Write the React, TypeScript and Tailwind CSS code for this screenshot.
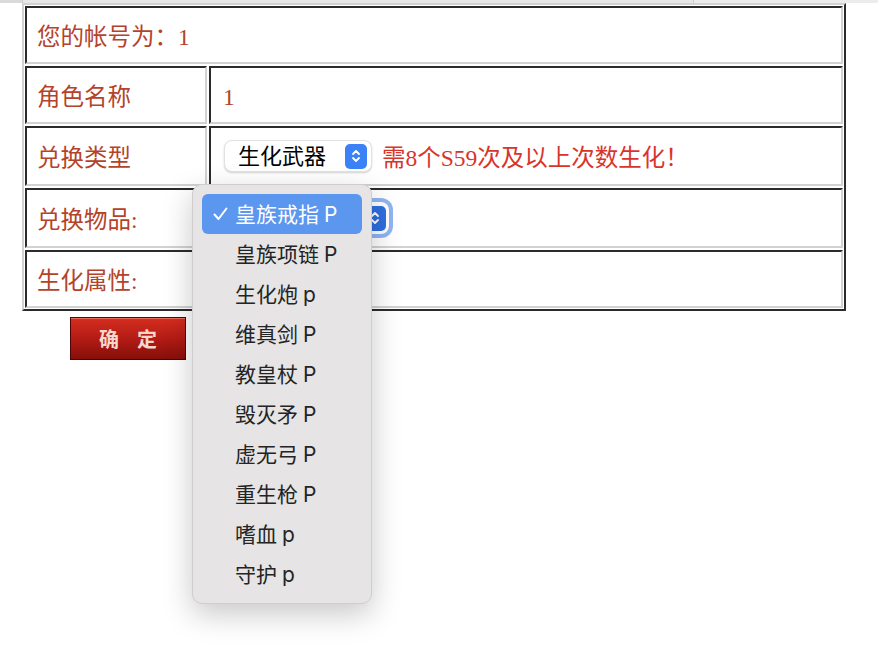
import React from "react";

const cellBase =
  "border-2 border-t-[#2b2b2b] border-l-[#2b2b2b] border-r-[#d2d2d2] border-b-[#d2d2d2] flex items-center";

function Stepper({ dark }: { dark?: boolean }) {
  return (
    <div
      className={`w-[22px] h-[25px] rounded-[5px] flex items-center justify-center ${
        dark ? "bg-[#2f6fe0]" : "bg-[#3b82f6]"
      }`}
    >
      <svg width="10" height="16" viewBox="0 0 10 16" fill="none">
        <path d="M2 6 L5 3 L8 6" stroke="white" strokeWidth="1.8" strokeLinecap="round" strokeLinejoin="round" />
        <path d="M2 10 L5 13 L8 10" stroke="white" strokeWidth="1.8" strokeLinecap="round" strokeLinejoin="round" />
      </svg>
    </div>
  );
}

const items: [string, string][] = [
  ["皇族戒指", "P"],
  ["皇族项链", "P"],
  ["生化炮", "p"],
  ["维真剑", "P"],
  ["教皇杖", "P"],
  ["毁灭矛", "P"],
  ["虚无弓", "P"],
  ["重生枪", "P"],
  ["嗜血", "p"],
  ["守护", "p"],
];

export default function App() {
  return (
    <div className="relative w-[878px] h-[646px] bg-white overflow-hidden">
      {/* top strip */}
      <div className="flex h-[3px]">
        <div className="w-[22px] bg-[#dadada]" />
        <div className="w-[671px] bg-[#e7e7e7] border-l border-[#cdcdcd]" />
        <div className="flex-1 bg-[#ececec] border-l border-[#cdcdcd]" />
      </div>

      {/* table */}
      <div
        className="ml-[22px] w-[824px] border-2 border-t-[#d2d2d2] border-l-[#d2d2d2] border-r-[#2b2b2b] border-b-[#2b2b2b] p-[1px] flex flex-col gap-[2px] text-[#b4432b] text-[23.5px]"
        style={{ fontFamily: '"Liberation Serif", "Noto Sans CJK SC", serif' }}
      >
        <div className={`${cellBase} h-[58px] pl-[10px] pt-[5px]`}>您的帐号为：1</div>

        <div className="flex gap-[2px]">
          <div className={`${cellBase} h-[58px] w-[182px] pl-[10px] pt-[5px]`}>角色名称</div>
          <div className={`${cellBase} h-[58px] flex-1 pl-[12px] pt-[5px]`}>1</div>
        </div>

        <div className="flex gap-[2px]">
          <div className={`${cellBase} h-[60px] w-[182px] pl-[10px] pt-[5px]`}>兑换类型</div>
          <div className={`${cellBase} h-[60px] flex-1 pl-[13px]`}>
            <div
              className="w-[148px] h-[32px] rounded-[8px] bg-white border border-[#e2e2e2] shadow-[0_1px_2px_rgba(0,0,0,0.18)] flex items-center pl-[13px] pr-[4px] justify-between text-[22px] text-black"
              style={{ fontFamily: '"Inter", "Noto Sans CJK SC", sans-serif' }}
            >
              <span>生化武器</span>
              <Stepper />
            </div>
            <span className="ml-[10px] mt-[5px] text-[#d9342b]">需8个S59次及以上次数生化！</span>
          </div>
        </div>

        <div className="flex gap-[2px]">
          <div className={`${cellBase} h-[60px] w-[182px] pl-[10px] pt-[5px]`}>兑换物品:</div>
          <div className={`${cellBase} h-[60px] flex-1 pl-[13px]`}>
            <div
              className="w-[165px] h-[32px] rounded-[8px] bg-white ring-4 ring-[#8fb5f1] flex items-center justify-end pr-[3px] text-[20px] text-black"
              style={{ fontFamily: '"Inter", "Noto Sans CJK SC", sans-serif' }}
            >
              <Stepper dark />
            </div>
          </div>
        </div>

        <div className="flex gap-[2px]">
          <div className={`${cellBase} h-[58px] w-[182px] pl-[10px] pt-[5px]`}>生化属性:</div>
          <div className={`${cellBase} h-[58px] flex-1`} />
        </div>
      </div>

      {/* submit button */}
      <div
        className="mt-[6px] ml-[70px] w-[116px] h-[43px] border border-[#4a0705] bg-gradient-to-b from-[#d62d20] via-[#b31c14] to-[#860f0b] shadow-[inset_0_1px_0_rgba(255,170,150,0.5)] flex items-center justify-center gap-[18px] text-[20px] font-semibold text-[#f7d6cd]"
        style={{ fontFamily: '"Noto Sans CJK SC", sans-serif' }}
      >
        <span>确</span>
        <span>定</span>
      </div>

      {/* dropdown menu */}
      <div
        className="absolute left-[192px] top-[184px] w-[180px] h-[420px] rounded-[10px] bg-[#e6e4e4] border border-[#cfcdcd] shadow-[0_10px_30px_rgba(0,0,0,0.22)] p-[9px] flex flex-col text-[21px] text-[#242424]"
        style={{ fontFamily: '"Inter", "Noto Sans CJK SC", sans-serif' }}
      >
        {items.map(([name, suffix], i) => (
          <div
            key={name}
            className={`h-[40px] shrink-0 rounded-[6px] flex items-center pl-[11px] ${
              i === 0 ? "bg-[#5b96ef] text-white" : ""
            }`}
          >
            <span className="w-[22px] flex items-center">
              {i === 0 ? (
                <svg width="15" height="14" viewBox="0 0 15 14" fill="none">
                  <path d="M1.5 7.5 L5.5 12 L13.5 1.5" stroke="white" strokeWidth="2" strokeLinecap="round" strokeLinejoin="round" />
                </svg>
              ) : null}
            </span>
            <span className="leading-none">{name}</span>
            <span className="ml-[5px] leading-none">{suffix}</span>
          </div>
        ))}
      </div>
    </div>
  );
}
